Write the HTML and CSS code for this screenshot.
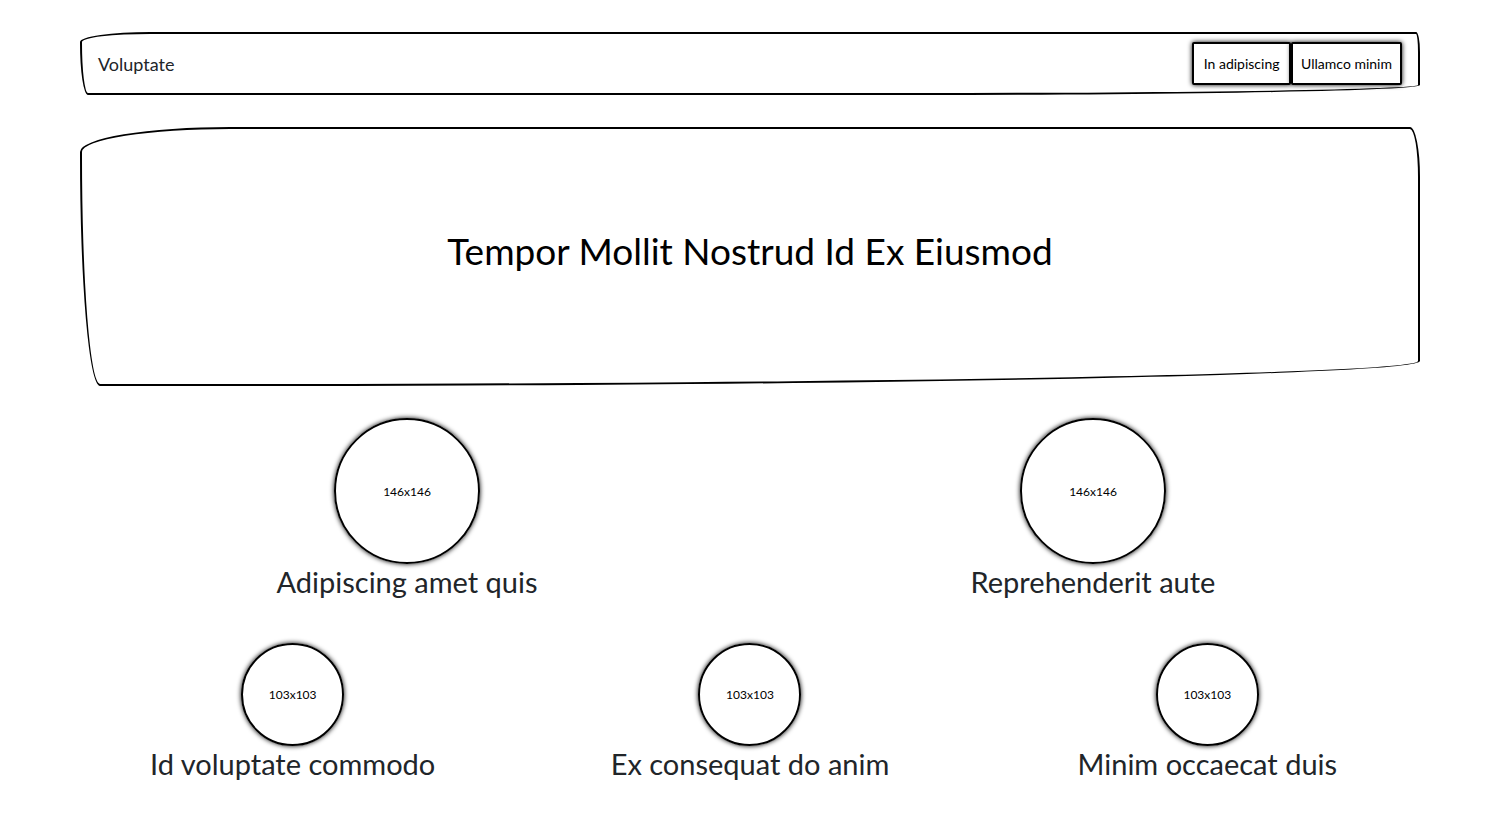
FILE: index.html
```html
<!DOCTYPE html>
<html lang="en">
<head>
<meta charset="utf-8">
<meta name="viewport" content="width=device-width, initial-scale=1">
<title>Voluptate</title>
<link rel="stylesheet" href="styles.css">
</head>
<body>
<div class="page">
  <nav class="navbar">
    <a class="brand" href="#">Voluptate</a>
    <div class="actions">
      <button class="action" type="button">In adipiscing</button>
      <button class="action" type="button">Ullamco minim</button>
    </div>
  </nav>
  <header class="hero">
    <h1 class="hero-title">Tempor Mollit Nostrud Id Ex Eiusmod</h1>
  </header>
  <section class="row">
    <article class="feature"><div class="circle large">146x146</div><h2 class="caption">Adipiscing amet quis</h2></article>
    <article class="feature"><div class="circle large">146x146</div><h2 class="caption">Reprehenderit aute</h2></article>
  </section>
  <section class="row">
    <article class="feature"><div class="circle small">103x103</div><h2 class="caption">Id voluptate commodo</h2></article>
    <article class="feature"><div class="circle small">103x103</div><h2 class="caption">Ex consequat do anim</h2></article>
    <article class="feature"><div class="circle small">103x103</div><h2 class="caption">Minim occaecat duis</h2></article>
  </section>
</div>
</body>
</html>
```
FILE: styles.css
```css
* {
  box-sizing: border-box;
}

body {
  margin: 0;
  background: #fff;
  color: #212529;
  font-family: Lato, "Open Sans", sans-serif;
}

.page {
  display: flex;
  flex-direction: column;
  gap: 32px;
  padding: 32px 80px;
}

.navbar {
  display: flex;
  align-items: center;
  justify-content: space-between;
  padding: 8px 16px;
  border: 2px solid #000;
  border-radius: 70px 4px 500px 8px / 10px 20px 10px 52px;
}

.brand {
  color: inherit;
  font-size: 18px;
  line-height: 24px;
  text-decoration: none;
}

.actions {
  display: flex;
}

.action {
  min-width: 99px;
  padding: 8px;
  border: 2px solid #000;
  border-radius: 2px;
  background: #fff;
  box-shadow: 0 0 5px #000;
  color: #000;
  font-family: inherit;
  font-size: 14px;
  line-height: 23px;
}

.hero {
  padding: 90px 32px 102px;
  border: 2px solid #000;
  border-radius: 150px 10px 1185px 20px / 25px 50px 25px 230px;
  color: #000;
  text-align: center;
}

.hero-title {
  margin: 0;
  font-size: 37px;
  font-weight: 400;
  line-height: 63px;
}

.row {
  display: flex;
  gap: 32px;
}

.feature {
  display: flex;
  flex: 1;
  flex-direction: column;
  align-items: center;
}

.circle {
  display: flex;
  align-items: center;
  justify-content: center;
  border: 2px solid #000;
  border-radius: 50%;
  box-shadow: 0 0 5px #000;
  color: #000;
  font-size: 12px;
}

.large {
  width: 146px;
  height: 146px;
}

.small {
  width: 103px;
  height: 103px;
}

.caption {
  margin: 0 0 12px;
  font-size: 29px;
  font-weight: 400;
  line-height: 35px;
  text-align: center;
}
```
